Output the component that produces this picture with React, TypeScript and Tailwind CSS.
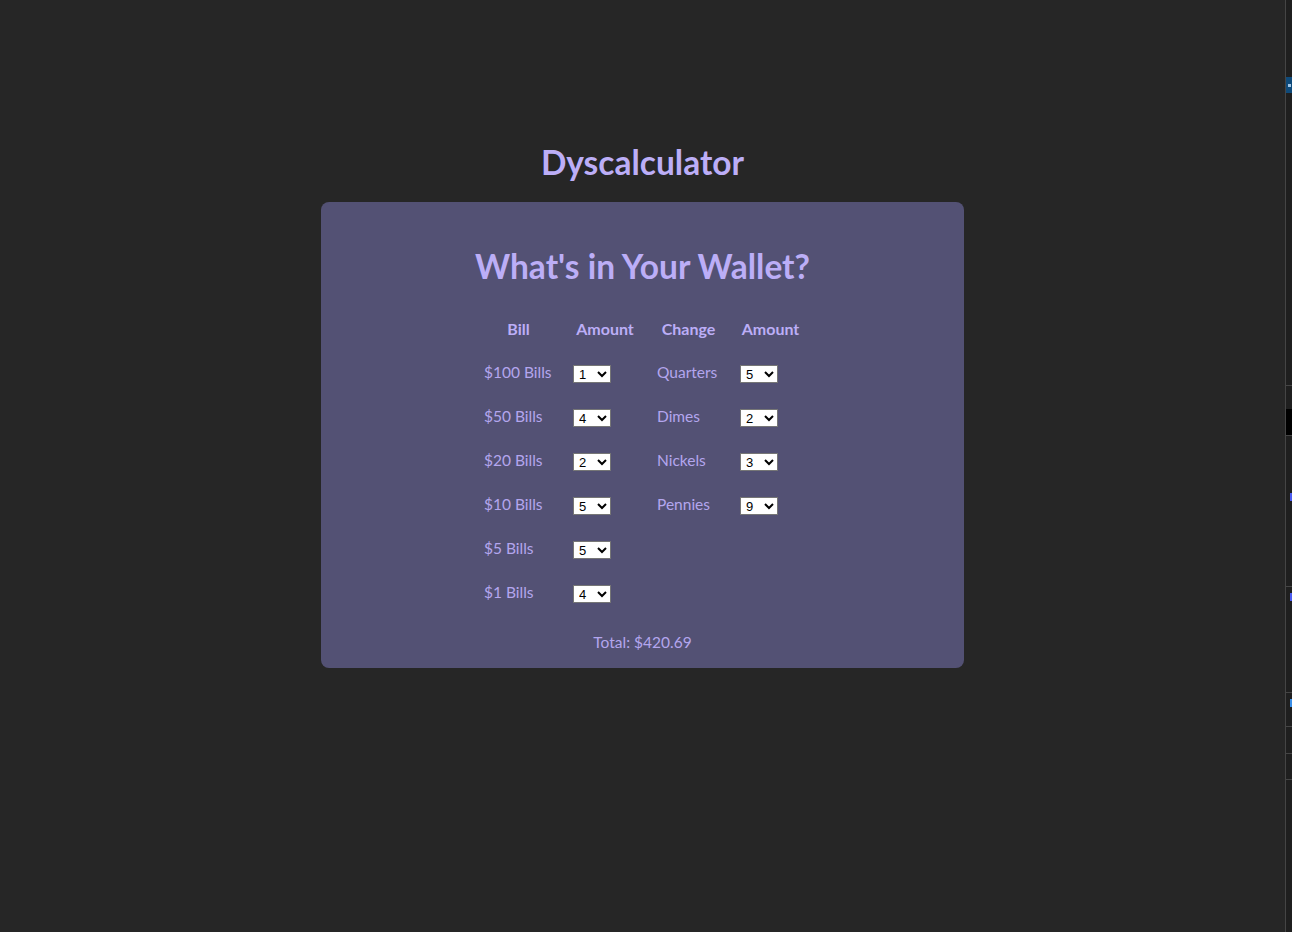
import React, { useState } from 'react';

const bills = [
  { label: '$100 Bills', value: 100, init: 1 },
  { label: '$50 Bills', value: 50, init: 4 },
  { label: '$20 Bills', value: 20, init: 2 },
  { label: '$10 Bills', value: 10, init: 5 },
  { label: '$5 Bills', value: 5, init: 5 },
  { label: '$1 Bills', value: 1, init: 4 },
];

const coins = [
  { label: 'Quarters', value: 25, init: 5 },
  { label: 'Dimes', value: 10, init: 2 },
  { label: 'Nickels', value: 5, init: 3 },
  { label: 'Pennies', value: 1, init: 9 },
];

const options = Array.from({ length: 11 }, (_, i) => i);

function AmountSelect({ value, onChange }: { value: number; onChange: (v: number) => void }) {
  return (
    <select
      value={value}
      onChange={(e) => onChange(Number(e.target.value))}
      className="mt-[1px] h-[18px] w-[38px] border border-[#767676] bg-white pl-[1px] text-[13px] leading-none text-black [font-family:'Liberation_Sans',Arial,sans-serif]"
    >
      {options.map((o) => (
        <option key={o} value={o}>
          {o}
        </option>
      ))}
    </select>
  );
}

function SideStrip() {
  return (
    <div className="flex w-[7px] shrink-0 flex-col border-l border-[#454545] bg-[#1f1f1f]">
      <div className="h-[77px]" />
      <div className="flex h-[16px] items-center justify-center bg-[#0e4a7a]">
        <div className="h-[3px] w-[3px] bg-[#9fc4e6]" />
      </div>
      <div className="h-[292px]" />
      <div className="h-[1px] bg-[#454545]" />
      <div className="h-[23px]" />
      <div className="h-[26px] bg-black" />
      <div className="h-[1px] bg-[#454545]" />
      <div className="h-[57px]" />
      <div className="ml-[4px] h-[8px] w-[3px] bg-[#4d5cf0]" />
      <div className="h-[85px]" />
      <div className="h-[1px] bg-[#454545]" />
      <div className="h-[6px]" />
      <div className="ml-[4px] h-[8px] w-[3px] bg-[#4d5cf0]" />
      <div className="h-[91px]" />
      <div className="h-[1px] bg-[#454545]" />
      <div className="h-[6px]" />
      <div className="ml-[4px] h-[8px] w-[3px] bg-[#3a8ee6]" />
      <div className="h-[19px]" />
      <div className="h-[1px] bg-[#454545]" />
      <div className="h-[26px]" />
      <div className="h-[1px] bg-[#454545]" />
      <div className="h-[25px]" />
      <div className="h-[1px] bg-[#454545]" />
    </div>
  );
}

export default function App() {
  const [billCounts, setBillCounts] = useState(bills.map((b) => b.init));
  const [coinCounts, setCoinCounts] = useState(coins.map((c) => c.init));

  const total =
    bills.reduce((s, b, i) => s + b.value * 100 * billCounts[i], 0) +
    coins.reduce((s, c, i) => s + c.value * coinCounts[i], 0);

  const headCls = 'flex h-[43px] items-center justify-center pb-[2px] text-[16px] font-bold text-[#bcaef7]';
  const cellCls = 'flex h-[44px] items-center pl-[10px] text-[15.5px] text-[#b3a6ee]';

  return (
    <div className="flex min-h-[932px] w-full bg-[#262626] [font-family:'Segoe_UI',Lato,'Noto_Sans',sans-serif]">
      <main className="flex flex-1 flex-col items-center pt-[142px]">
        <h1 className="text-[33.5px] font-bold leading-[40px] text-[#bcaef7]">Dyscalculator</h1>
        <section className="mt-[20px] flex w-1/2 flex-col items-center rounded-[8px] bg-[#535174] pb-[14px] pt-[40px]">
          <h2 className="text-[33.5px] font-bold leading-[48px] text-[#bcaef7]">What's in Your Wallet?</h2>
          <div className="mt-[18px] grid grid-cols-[89px_84px_83px_81px]">
            <div className={headCls}>Bill</div>
            <div className={headCls}>Amount</div>
            <div className={headCls}>Change</div>
            <div className={headCls}>Amount</div>
            {bills.map((b, i) => (
              <React.Fragment key={b.label}>
                <div className={cellCls}>{b.label}</div>
                <div className={cellCls}>
                  <AmountSelect
                    value={billCounts[i]}
                    onChange={(v) => setBillCounts((prev) => prev.map((p, j) => (j === i ? v : p)))}
                  />
                </div>
                <div className={cellCls}>{coins[i]?.label}</div>
                <div className={cellCls}>
                  {coins[i] && (
                    <AmountSelect
                      value={coinCounts[i]}
                      onChange={(v) => setCoinCounts((prev) => prev.map((p, j) => (j === i ? v : p)))}
                    />
                  )}
                </div>
              </React.Fragment>
            ))}
          </div>
          <p className="mt-[15px] text-[15.5px] leading-[24px] text-[#b3a6ee]">
            Total: ${(total / 100).toFixed(2)}
          </p>
        </section>
      </main>
      <SideStrip />
    </div>
  );
}
